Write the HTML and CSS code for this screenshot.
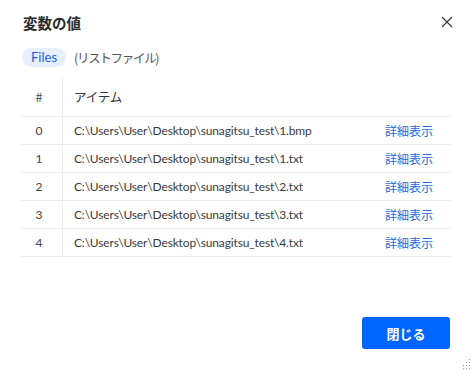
FILE: index.html
```html
<!DOCTYPE html>
<html lang="ja">
<head>
<meta charset="utf-8" />
<title>変数の値</title>
<link rel="stylesheet" href="styles.css">
</head>
<body>
<div class="dialog">
	<div class="head">
		<h1>変数の値</h1>
		<button class="close" aria-label="閉じる">
			<svg width="12" height="12" viewBox="0 0 12 12"><path d="M1 1 L11 11 M11 1 L1 11" stroke="#333" stroke-width="1.1" fill="none"/></svg>
		</button>
	</div>
	<div class="tabs">
		<span class="pill">Files</span>
		<span class="kind">(リストファイル)</span>
	</div>
	<table class="grid">
		<thead>
			<tr><th class="num">#</th><th class="item">アイテム</th><th></th></tr>
		</thead>
		<tbody>
			<tr><td class="num">0</td><td class="item">C:\Users\User\Desktop\sunagitsu_test\1.bmp</td><td class="more"><a href="#">詳細表示</a></td></tr>
			<tr><td class="num">1</td><td class="item">C:\Users\User\Desktop\sunagitsu_test\1.txt</td><td class="more"><a href="#">詳細表示</a></td></tr>
			<tr><td class="num">2</td><td class="item">C:\Users\User\Desktop\sunagitsu_test\2.txt</td><td class="more"><a href="#">詳細表示</a></td></tr>
			<tr><td class="num">3</td><td class="item">C:\Users\User\Desktop\sunagitsu_test\3.txt</td><td class="more"><a href="#">詳細表示</a></td></tr>
			<tr><td class="num">4</td><td class="item">C:\Users\User\Desktop\sunagitsu_test\4.txt</td><td class="more"><a href="#">詳細表示</a></td></tr>
		</tbody>
	</table>
	<div class="foot">
		<button class="primary">閉じる</button>
	</div>
	<svg class="grip" width="10" height="10" viewBox="0 0 10 10">
		<g fill="#9aa0aa">
			<rect x="8" y="0" width="1" height="1"/>
			<rect x="5" y="3" width="1" height="1"/><rect x="8" y="3" width="1" height="1"/>
			<rect x="2" y="6" width="1" height="1"/><rect x="5" y="6" width="1" height="1"/><rect x="8" y="6" width="1" height="1"/>
			<rect x="2" y="9" width="1" height="1"/><rect x="5" y="9" width="1" height="1"/><rect x="8" y="9" width="1" height="1"/>
		</g>
	</svg>
</div>
</body>
</html>
```

FILE: styles.css
```css
body {
	margin: 0;
	padding: 0;
	font-family: "Lato", "Noto Sans CJK JP", sans-serif;
	color: #333;
	background: #fff;
}
.dialog {
	position: relative;
	width: 474px;
	height: 370px;
	box-sizing: border-box;
	padding: 0 24px 0 22px;
	display: flex;
	flex-direction: column;
}
.head {
	display: flex;
	align-items: center;
	justify-content: space-between;
	height: 44px;
}
h1 {
	margin: 0;
	padding-left: 1px;
	font-size: 14.5px;
	font-weight: bold;
	color: #2b2b2b;
	font-family: "Noto Sans CJK JP", sans-serif;
}
.close {
	border: none;
	background: none;
	padding: 0;
	width: 14px;
	height: 14px;
	display: flex;
	align-items: center;
	justify-content: center;
	margin-right: -4px;
}
.tabs {
	display: flex;
	align-items: center;
	gap: 8px;
	height: 20px;
	margin-top: 3px;
}
.pill {
	background: #e5efff;
	color: #1f63d9;
	font-size: 13px;
	border-radius: 10px;
	padding: 0 9px;
	height: 19px;
	line-height: 19px;
}
.kind {
	font-size: 12.5px;
	letter-spacing: -1.3px;
	color: #555;
	font-family: "Noto Sans CJK JP", sans-serif;
}
.grid {
	margin-top: 10px;
	width: 428px;
	border-collapse: collapse;
	font-size: 12px;
}
.grid th {
	height: 39px;
	text-align: left;
	font-weight: normal;
	font-size: 12.5px;
	letter-spacing: -0.6px;
	color: #333;
	font-family: "Noto Sans CJK JP", sans-serif;
	padding: 0;
}
.grid td {
	height: 27px;
	padding: 0;
	border-top: 1px solid #ececec;
	border-bottom: 1px solid #ececec;
	color: #3a3a3a;
}
.grid .num {
	width: 34px;
	padding-right: 6px;
	text-align: center;
	border-right: 1px solid #ececec;
	color: #444;
	letter-spacing: 0;
}
.grid .item {
	padding-left: 11px;
	letter-spacing: -0.15px;
}
.grid .more {
	text-align: right;
	padding-right: 17px;
}
.more a {
	color: #1a6be0;
	text-decoration: none;
	font-family: "Noto Sans CJK JP", sans-serif;
}
.foot {
	margin-top: auto;
	display: flex;
	justify-content: flex-end;
	padding-bottom: 21px;
}
.primary {
	width: 88px;
	height: 32px;
	border: none;
	border-radius: 3px;
	background: #0066ff;
	color: #fff;
	font-size: 13px;
	font-weight: bold;
	font-family: "Noto Sans CJK JP", sans-serif;
}
.grip {
	position: absolute;
	right: 3px;
	bottom: 1px;
}
```
